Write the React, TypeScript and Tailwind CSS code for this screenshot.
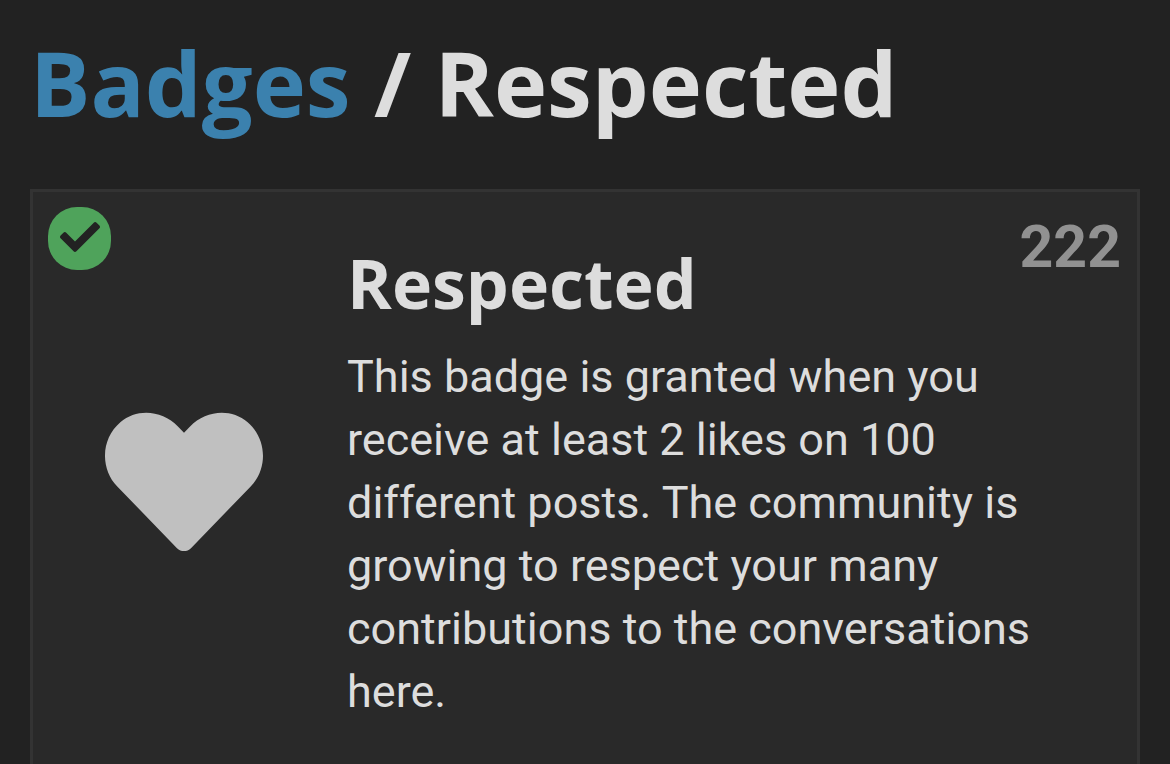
import { FaCheck, FaHeart } from "react-icons/fa";

interface Badge {
  name: string;
  description: string;
  count: number;
  granted: boolean;
}

const badge: Badge = {
  name: "Respected",
  description:
    "This badge is granted when you receive at least 2 likes on 100 different posts. The community is growing to respect your many contributions to the conversations here.",
  count: 222,
  granted: true,
};

function BadgeCard({ badge }: { badge: Badge }) {
  return (
    <article className="relative flex min-h-[586px] border-[3px] border-[#333333] bg-[#292929]">
      {badge.granted && (
        <span className="absolute left-[15px] top-[15px] flex size-[63px] items-center justify-center rounded-[29px] bg-[#4fa35b] pb-1 text-[#222222]">
          <FaCheck className="size-10" />
        </span>
      )}
      <span className="absolute right-4 top-5 text-[59px] leading-[70px] font-bold text-[#919191]">
        {badge.count}
      </span>

      {/* Icon */}
      <div className="flex w-[302px] shrink-0 items-center justify-center text-[#c0c0c0]">
        <FaHeart className="size-[158px]" />
      </div>

      {/* Name and description */}
      <div className="flex-1 pt-[55px] pr-24 pl-3">
        <h2 className="font-['Open_Sans',sans-serif] text-[68px] leading-[72px] font-bold">{badge.name}</h2>
        <p className="mt-[26px] text-[45px] leading-[63px]">{badge.description}</p>
      </div>
    </article>
  );
}

export default function App() {
  return (
    <main className="h-screen overflow-hidden bg-[#222222] px-[30px] pt-[30px] font-[Roboto,sans-serif] text-[#dddddd]">
      <h1 className="mb-[55px] font-['Open_Sans',sans-serif] text-[90px] leading-[104px] font-bold">
        <a href="#badges" className="text-[#3b81ae]">
          Badges
        </a>{" "}
        / {badge.name}
      </h1>
      <BadgeCard badge={badge} />
    </main>
  );
}
